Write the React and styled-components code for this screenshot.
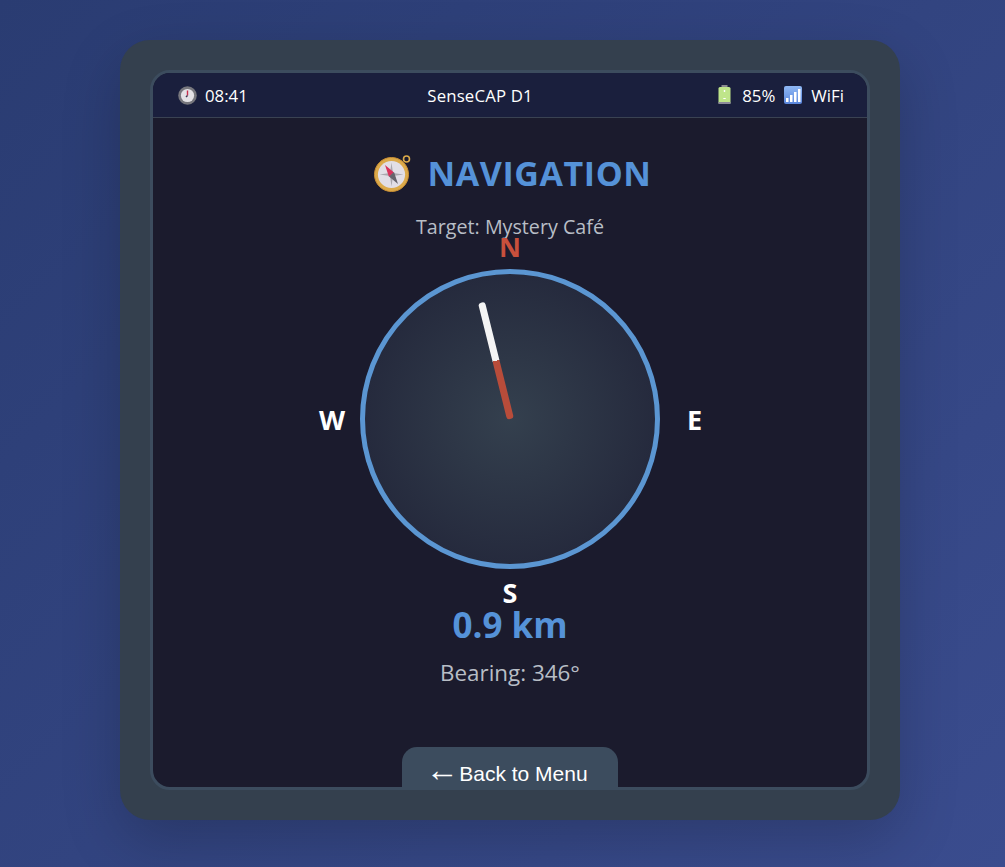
import React from "react";
import styled, { createGlobalStyle } from "styled-components";

const GlobalStyle = createGlobalStyle`
  html, body {
    margin: 0;
    padding: 0;
  }
  body {
    min-height: 867px;
    background: linear-gradient(135deg, #2a3c72 0%, #3a4c8e 100%);
    font-family: "Open Sans", "Noto Sans", sans-serif;
    overflow: hidden;
  }
`;

const Page = styled.div`
  display: flex;
  padding: 40px 0 0 120px;
`;

const Device = styled.div`
  width: 780px;
  height: 780px;
  box-sizing: border-box;
  padding: 30px;
  border-radius: 30px;
  background: #34404e;
  box-shadow: 0 20px 60px rgba(0, 0, 0, 0.2);
`;

const Screen = styled.div`
  height: 100%;
  box-sizing: border-box;
  border: 3px solid #3c4c5e;
  border-radius: 20px;
  background: #1b1b2d;
  overflow: hidden;
  display: flex;
  flex-direction: column;
`;

const StatusBar = styled.div`
  height: 44px;
  flex: none;
  display: flex;
  justify-content: space-between;
  align-items: center;
  padding: 0 23px 0 25px;
  background: #1a1f3d;
  border-bottom: 1px solid #3a4252;
  color: #fff;
  font-size: 16.8px;
`;

const StatusGroup = styled.div`
  display: flex;
  align-items: center;
  gap: ${props => props.gap || 7}px;
`;

const DeviceName = styled.span`
  margin-right: 6px;
  letter-spacing: 0.15px;
`;

const Content = styled.div`
  flex: 1;
  display: flex;
  flex-direction: column;
  align-items: center;
  padding-top: 33px;
`;

const Title = styled.h1`
  margin: 0 0 0 6px;
  display: flex;
  align-items: center;
  gap: 15px;
  font-size: 34px;
  line-height: 44px;
  font-weight: 700;
  letter-spacing: 0.6px;
  color: #5592d8;
`;

const Target = styled.div`
  margin-top: 18px;
  font-size: 19.7px;
  line-height: 27px;
  color: #b8bec6;
`;

const Compass = styled.div`
  position: relative;
  width: 300px;
  height: 300px;
  box-sizing: border-box;
  margin-top: 29px;
  border: 5px solid #5b96d2;
  border-radius: 50%;
  background: radial-gradient(circle, #34404e 0%, #1f2136 100%);
`;

const Direction = styled.span`
  position: absolute;
  font-size: 27px;
  line-height: 30px;
  font-weight: 700;
  color: ${props => props.color || "#fff"};
  ${props => props.place}
`;

const Needle = styled.div`
  position: absolute;
  left: 141.75px;
  top: 25px;
  width: 6.5px;
  height: 120px;
  border-radius: 3px;
  background: linear-gradient(to bottom, #f4f4f4 50%, #b84c3a 50%);
  transform: rotate(-14deg);
  transform-origin: 50% 100%;
`;

const Distance = styled.div`
  margin-top: 31px;
  font-size: 35px;
  line-height: 49px;
  font-weight: 700;
  color: #5592d8;
`;

const Bearing = styled.div`
  margin-top: 9px;
  font-size: 22.4px;
  line-height: 30px;
  color: #b8bec6;
`;

const BackButton = styled.button`
  flex: none;
  margin-top: 59px;
  width: 216px;
  height: 54px;
  padding: 0 7px 2px 0;
  border: 0;
  border-radius: 15px;
  background: #3c4c5e;
  color: #fff;
  font-family: "Liberation Sans", Arial, sans-serif;
  font-size: 21px;
`;

const Arrow = styled.span`
  margin-right: -5px;
  font-size: 33px;
  line-height: 20px;
`;

const ClockIcon = () => (
  <svg width="19" height="19" viewBox="0 0 19 19">
    <circle cx="9.5" cy="9.5" r="9.3" fill="#77777d" />
    <circle cx="9.5" cy="9.5" r="6.6" fill="#e4e2e6" />
    <path d="M9.5 9.5V4.5" stroke="#c8304e" strokeWidth="1.4" />
    <path d="M9.5 9.5L8 11" stroke="#3a3550" strokeWidth="1.4" />
  </svg>
);

const BatteryIcon = () => (
  <svg width="15" height="20" viewBox="0 0 15 20">
    <rect x="3.5" y="0" width="6" height="2" fill="#8a8a8f" />
    <rect x="0.5" y="2" width="12" height="17" rx="1.5" fill="#bfe58a" />
    <rect x="0.5" y="17" width="12" height="2" fill="#8c8a9a" />
    <rect x="5.8" y="5" width="1.4" height="2" fill="#fff" />
    <rect x="5.3" y="13" width="2.4" height="1" fill="#fff" />
  </svg>
);

const SignalIcon = () => (
  <svg width="18" height="18" viewBox="0 0 18 18">
    <defs>
      <linearGradient id="signalFill" x1="0" y1="0" x2="0" y2="1">
        <stop offset="0" stopColor="#8fb8f5" />
        <stop offset="1" stopColor="#5a86dc" />
      </linearGradient>
    </defs>
    <rect width="18" height="18" rx="2" fill="url(#signalFill)" />
    <rect x="2" y="12" width="2.5" height="4" fill="#fff" />
    <rect x="6" y="9" width="2.5" height="7" fill="#fff" />
    <rect x="10" y="6" width="2.5" height="10" fill="#fff" />
    <rect x="14" y="3" width="2.5" height="13" fill="#fff" />
  </svg>
);

const CompassIcon = () => (
  <svg width="38" height="38" viewBox="0 0 38 38">
    <circle cx="32.5" cy="5" r="3" fill="none" stroke="#dcaa4a" strokeWidth="1.6" />
    <circle cx="17.5" cy="20.5" r="17" fill="#dcaa4a" />
    <circle cx="17.5" cy="20.5" r="17" fill="none" stroke="#c98f35" strokeWidth="1" />
    <circle cx="17.5" cy="20.5" r="13.6" fill="#e2dfe6" />
    <path d="M17.5 8.5L19 19 29.5 20.5 19 22 17.5 32.5 16 22 5.5 20.5 16 19z" fill="#aaa8ae" />
    <path d="M11 11L20 18.5 15 23z" fill="#d8335c" />
    <path d="M24 30L15 22.5 20 18z" fill="#66646c" />
  </svg>
);

export default function App() {
  return (
    <Page>
      <GlobalStyle />
      <Device>
        <Screen>
          <StatusBar>
            <StatusGroup gap={8}>
              <ClockIcon />
              <span>08:41</span>
            </StatusGroup>
            <DeviceName>SenseCAP D1</DeviceName>
            <StatusGroup gap={9}>
              <BatteryIcon />
              <span>85%</span>
              <SignalIcon />
              <span>WiFi</span>
            </StatusGroup>
          </StatusBar>
          <Content>
            <Title>
              <CompassIcon />
              NAVIGATION
            </Title>
            <Target>Target: Mystery Café</Target>
            <Compass>
              <Direction color="#c8503c" place="top: -42px; left: 50%; transform: translateX(-50%);">N</Direction>
              <Direction place="bottom: -44px; left: 50%; transform: translateX(-50%);">S</Direction>
              <Direction place="top: 131px; right: -47px;">E</Direction>
              <Direction place="top: 131px; left: -46px;">W</Direction>
              <Needle />
            </Compass>
            <Distance>0.9 km</Distance>
            <Bearing>Bearing: 346°</Bearing>
            <BackButton><Arrow>←</Arrow> Back to Menu</BackButton>
          </Content>
        </Screen>
      </Device>
    </Page>
  );
}
